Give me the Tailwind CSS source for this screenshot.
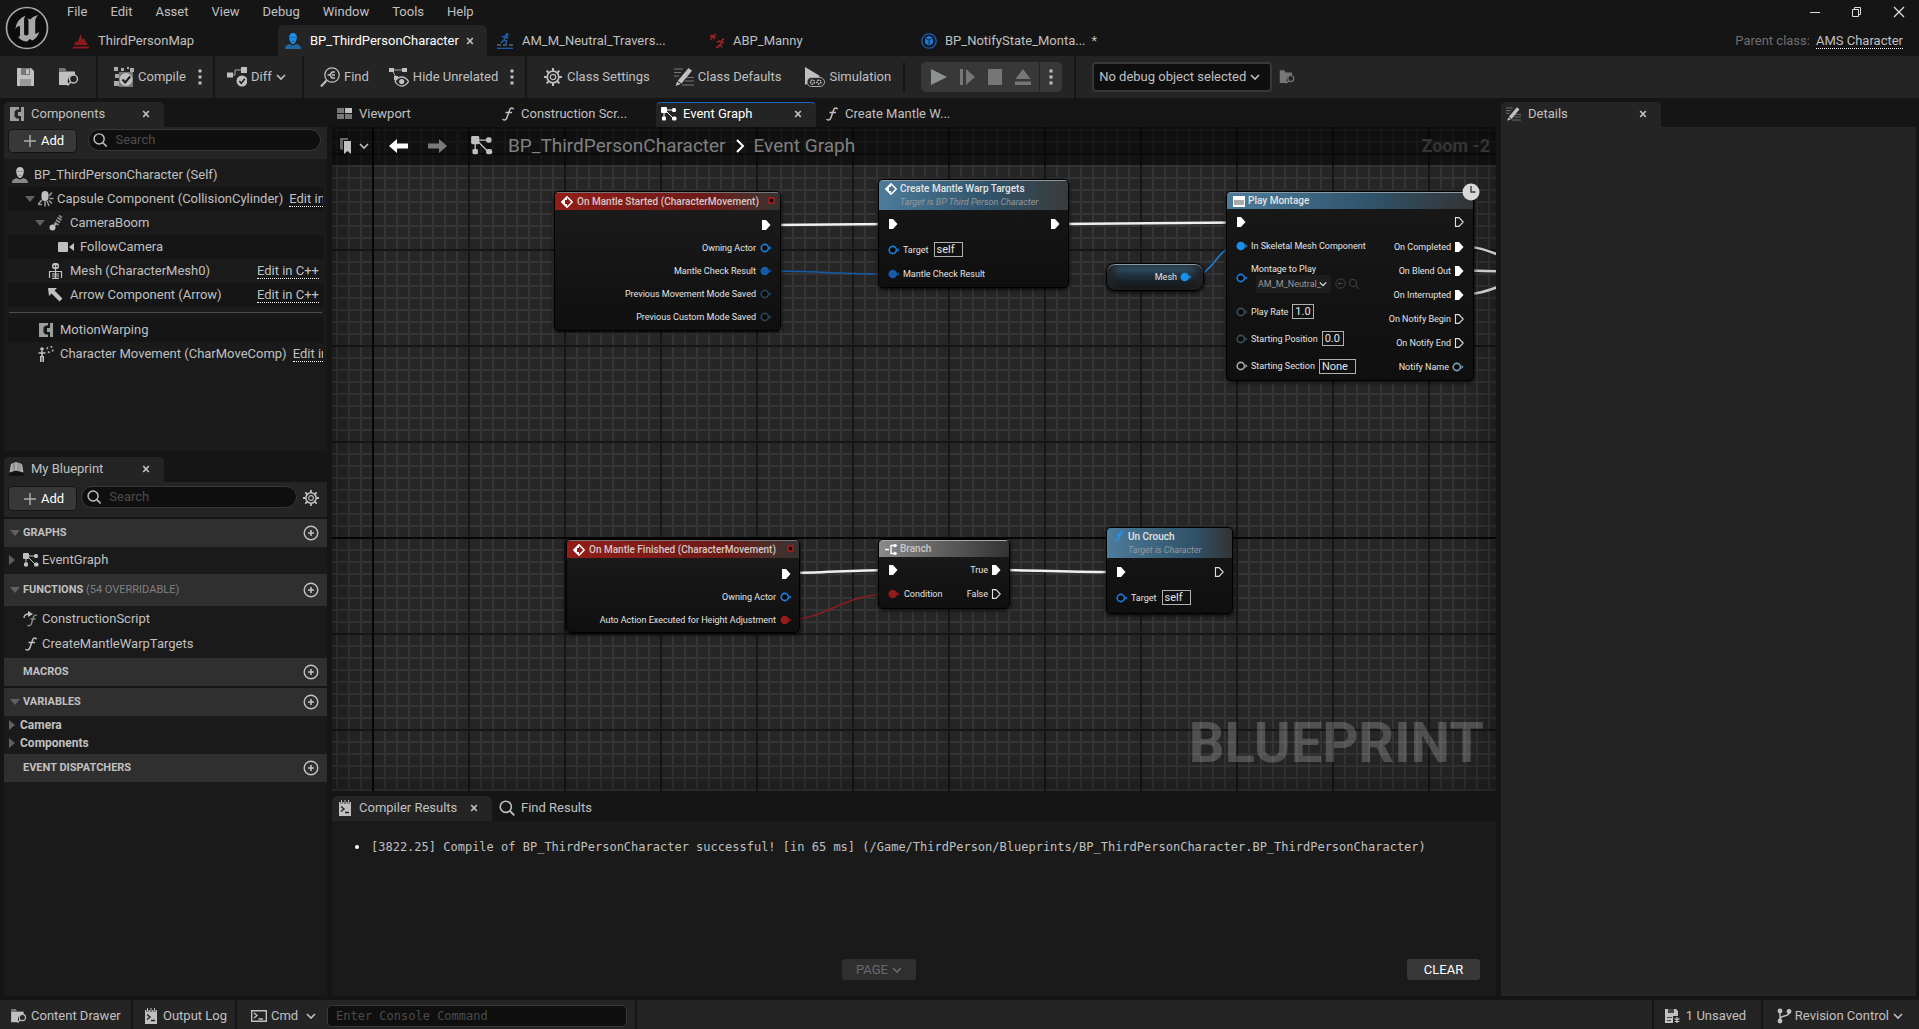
<!DOCTYPE html>
<html lang="en">
<head>
<meta charset="utf-8">
<title>BP_ThirdPersonCharacter</title>
<script src="https://cdn.jsdelivr.net/npm/@tailwindcss/browser@4"></script>
</head>
<body class="h-screen overflow-hidden bg-[#151515] font-['Roboto',sans-serif] text-[13px] leading-4 text-[#c0c0c0]">

<svg class="hidden" aria-hidden="true">
  <symbol id="chev" viewBox="0 0 10 10"><path d="M1 3l4 4 4-4" fill="none" stroke="currentColor" stroke-width="1.6"/></symbol>
  <symbol id="close" viewBox="0 0 8 8"><path d="M1.2 1l5.6 6M6.8 1L1.2 7" stroke="currentColor" stroke-width="1.7"/></symbol>
  <symbol id="dots" viewBox="0 0 4 16"><path d="M.5.5h3v3h-3zM.5 6.500h3v3h-3zM.5 12.500h3v3h-3z" fill="currentColor"/></symbol>
  <symbol id="search" viewBox="0 0 16 16"><circle cx="6.800" cy="6.800" r="5.600" fill="none" stroke="currentColor" stroke-width="1.600"/><path d="M11 11l4.300 4.300" stroke="currentColor" stroke-width="1.800"/></symbol>
  <symbol id="plus" viewBox="0 0 14 14"><path d="M7 1v12M1 7h12" stroke="currentColor" stroke-width="1.500"/></symbol>
  <symbol id="pluscircle" viewBox="0 0 16 16"><circle cx="8" cy="8" r="6.800" fill="none" stroke="currentColor" stroke-width="1.400"/><path d="M8 5v6M5 8h6" stroke="currentColor" stroke-width="1.600"/></symbol>
  <symbol id="down" viewBox="0 0 10 6"><path d="M0 0h10L5 6z" fill="#606060"/></symbol>
  <symbol id="right" viewBox="0 0 6 10"><path d="M0 0v10l6-5z" fill="#606060"/></symbol>
  <symbol id="gear" viewBox="0 0 18 18"><path d="M9 0v18M0 9h18M2.600 2.600l12.800 12.800M15.400 2.600L2.600 15.400" stroke="currentColor" stroke-width="2"/><circle cx="9" cy="9" r="5.800" fill="#242424" stroke="currentColor" stroke-width="1.700"/><circle cx="9" cy="9" r="2.700" fill="none" stroke="currentColor" stroke-width="1.200"/></symbol>
  <symbol id="comp" viewBox="0 0 14 14"><path d="M0 0h9v2.500H6.500L4.500 4.500v5l2 2H9V14H0zM11 0h3v14h-3v-5H8V5h3z" fill="#9a9f9c"/></symbol>
  <symbol id="graph" viewBox="0 0 16 14"><path d="M3 3v8M5 3h7M5 4l7 7" stroke="currentColor" stroke-width="1"/><rect width="6" height="6" rx="1" fill="currentColor"/><rect x="1" y="9.500" width="4" height="4" rx="1" fill="currentColor"/><rect x="11" y="1" width="4" height="4" rx="1.500" fill="currentColor"/><rect x="11" y="9.500" width="4.500" height="4" rx="1.500" fill="currentColor"/></symbol>
  <symbol id="func" viewBox="0 0 14 16"><path d="M12.500 3.200C12 1.500 9.600 1.400 8.800 3.500L5.800 12c-.8 2.400-3.400 2.600-4.200 1M4.500 6.500h6.500" fill="none" stroke="currentColor" stroke-width="1.500"/></symbol>
  <symbol id="pencil" viewBox="0 0 20 18"><path d="M0 1h9M0 4.500h7M0 8h5M12 9.500h8M11 13h9M8 17h12" stroke="#777" stroke-width="1.200"/><path d="M14.500 0L18 2.700 7.500 15.500 3.800 12.800z" fill="currentColor"/><path d="M3.200 13.600l3.500 2.500L1.500 18z" fill="currentColor"/></symbol>
  <symbol id="folder" viewBox="0 0 21 18"><path d="M1 0h6l1.500 3H17v2H1z" fill="#777"/><path d="M1 4h16v3a6 6 0 0 0-6 9.500V17H1z" fill="currentColor"/><circle cx="15.500" cy="11" r="4" fill="none" stroke="currentColor" stroke-width="1.500"/><path d="M12.700 14L9.500 17.500" stroke="currentColor" stroke-width="1.500"/></symbol>
  <symbol id="log" viewBox="0 0 12 16"><path d="M0 2h12v14H0z" fill="currentColor"/><path d="M2.500 0v3.500M6 0v3.500M9.500 0v3.500" stroke="#222" stroke-width="2.200"/><path d="M2.500 0v3M6 0v3M9.500 0v3" stroke="currentColor" stroke-width="1"/><path d="M2 6.500l3 2.500-3 2.500M6 12.500h4" fill="none" stroke="#222" stroke-width="1.500"/></symbol>
  <symbol id="person" viewBox="0 0 16 16"><path d="M8 0c2.600 0 3.800 1.800 3.800 4.200S10.300 11 8 11 4.200 6.600 4.200 4.200 5.400 0 8 0z" fill="currentColor"/><path d="M0 16c0-3.500 2.500-4.500 5-5 1.500 1.800 4.500 1.800 6 0 2.500.5 5 1.500 5 5z" fill="currentColor" opacity=".65"/><path d="M5.700 4.500h1.600M8.700 4.500h1.600M6.900 8.300h2.200" stroke="#111" stroke-opacity=".5" stroke-width=".9"/></symbol>
  <symbol id="execOn" viewBox="0 0 10 10"><path d="M1 0h4l4.500 5L5 10H1z" fill="#fff"/></symbol>
  <symbol id="execOff" viewBox="0 0 10 10"><path d="M1.500.6H5L9.200 5 5 9.400H1.500z" fill="none" stroke="#e0e0e0" stroke-width="1.100"/></symbol>
  <symbol id="pin" viewBox="0 0 12 10"><circle cx="4.800" cy="5" r="3.600" fill="#0a0a0a" stroke="currentColor" stroke-width="1.600"/><path d="M9.500 3v4l2-2z" fill="currentColor"/></symbol>
  <symbol id="pinOn" viewBox="0 0 12 10"><circle cx="4.800" cy="5" r="4.300" fill="currentColor"/><path d="M9.500 3v4l2-2z" fill="currentColor"/></symbol>
  <symbol id="event" viewBox="0 0 12 12"><path d="M6 .8L11.200 6 6 11.200.8 6z" fill="none" stroke="#fff" stroke-width="1.500"/><path d="M6 .8L.8 6 6 11.200V8H4V4h2z" fill="#fff"/></symbol>
</svg>

<div class="flex h-full flex-col">

  <!-- Title bar: menu and asset tabs -->
  <header class="flex h-14 shrink-0">
    <div class="flex w-[66px] shrink-0 items-center pl-[5px]">
      <svg class="size-11" viewBox="0 0 44 44"><circle cx="22" cy="22" r="20.500" fill="#0c0c0c" stroke="#a8a8a8" stroke-width="1.700"/><path d="M21 9.500c-6 2-10 7-10.500 13.500 1-2 2.500-3 3.500-3 .8 0 1 .6 1 1.500v7.500c0 1.500-.8 2-2 1.800 2.200 3 5.200 4.700 9.200 4.700l2.600-2.500 2.500 1.500c3.500-1.500 6-5 7-9-1.400 1.400-2.600 2.200-3.300 2.200-.5 0-.8-.4-.8-1V15c0-2.500 1.500-4.500 3-6-3 .7-5.500 2-8 4.500-1-.8-2-1-3-.8.900.6 1.300 1.500 1.300 2.600v13c-.7.800-1.600 1.200-2.600 1.200-1.200 0-1.800-.7-1.800-2V14c0-2 .7-3.500 1.900-4.500z" fill="#a8a8a8"/></svg>
    </div>
    <div class="flex min-w-0 flex-1 flex-col">
      <div class="flex h-[25px] items-center justify-between pb-px">
        <nav class="flex gap-[23px] pl-px">
          <a href="#">File</a><a href="#">Edit</a><a href="#">Asset</a><a href="#">View</a><a href="#">Debug</a><a href="#">Window</a><a href="#">Tools</a><a href="#">Help</a>
        </nav>
        <div class="flex items-center gap-[30px] pr-[14px]">
          <button aria-label="Minimize"><svg class="size-3" viewBox="0 0 12 12"><path d="M1 6.500h10" stroke="#ddd"/></svg></button>
          <button aria-label="Restore"><svg class="size-3" viewBox="0 0 12 12"><path d="M1.500 3.500h6v7h-6zM3.500 3V1.500h6v7H8" fill="none" stroke="#ddd"/></svg></button>
          <button aria-label="Close"><svg class="size-3" viewBox="0 0 12 12"><path d="M1 1l10 10M11 1L1 11" stroke="#ddd" stroke-width="1.300"/></svg></button>
        </div>
      </div>
      <div class="flex flex-1 justify-between">
        <div class="flex gap-[3px]">
          <div class="flex w-[209px] items-center gap-2 pl-[7px]"><svg class="size-4 text-[#8e1b1b]" viewBox="0 0 16 16"><path d="M0 15.500h16v-2H0zM1 12l2-4 1.500 2L7.500 1l2 6 1.500-2 2 4 2 3z" fill="currentColor"/></svg><span class="pl-px">ThirdPersonMap</span></div>
          <div class="flex w-[209px] items-center gap-[7px] rounded-t-[5px] bg-[#242424] pl-[7px] text-white"><svg class="size-4 text-[#1a8fe8]"><use href="#person"/></svg><span class="pl-[2px]">BP_ThirdPersonCharacter</span><button aria-label="Close tab" class="text-[#c0c0c0]"><svg class="size-2"><use href="#close"/></svg></button></div>
          <div class="flex w-[209px] items-center gap-2 pl-[7px]"><svg class="size-4 text-[#1a64b5]" viewBox="0 0 16 16"><circle cx="10" cy="1.500" r="1.500" fill="currentColor"/><path d="M5 4l4-1-2 4 2.500 1L9 11M7 7l-3 3M9 3l2 2.500" fill="none" stroke="currentColor" stroke-width="1.500"/><path d="M0 12h4M6 12h4M12 12h4" stroke="#456" stroke-width="2"/><path d="M0 15.300h16" stroke="currentColor" stroke-width="1.200"/></svg><span class="pl-px">AM_M_Neutral_Travers...</span></div>
          <div class="flex w-[209px] items-center gap-2 pl-[7px]"><svg class="size-4 text-[#a02525]" viewBox="0 0 16 16"><g fill="none" stroke="currentColor" stroke-width="1.500"><path d="M1 3l3-.5L6 4 4.500 6M4 3L2.500 5.500 1 6.500M8 9l3-1 2 .5-1.500 3 1.500 3M11.500 11L9 14l-2 .5M13 9l2 1.500"/></g><circle cx="6" cy="1.500" r="1" fill="currentColor"/><circle cx="14" cy="6.500" r="1.200" fill="currentColor"/></svg><span>ABP_Manny</span></div>
          <div class="flex w-[209px] items-center gap-[6px] pl-[7px]"><svg class="size-4" viewBox="0 0 16 16"><circle cx="8" cy="8" r="7.200" fill="none" stroke="#1a64b5" stroke-width="1.300"/><path d="M8 2.800l4 2v5.500l-4 2.700-4-2.700V4.800z" fill="#1c78d8"/><path d="M4 5l4 2 4-2M8 7v6" stroke="#0c2c50" fill="none"/></svg><span class="pl-[2px]">BP_NotifyState_Monta...</span><span>*</span></div>
        </div>
        <div class="flex items-center gap-[6px] pr-4"><span class="text-[#6e6e6e]">Parent class:</span><a href="#" class="border-b border-dotted border-white leading-[15px]">AMS Character</a></div>
      </div>
    </div>
  </header>

  <!-- Toolbar -->
  <div class="flex h-[42px] shrink-0 items-stretch bg-[#242424]">
    <div class="flex w-[98px] items-center gap-[23px] border-r-2 border-[#171717] pl-4">
      <button aria-label="Save"><svg class="h-[18px] w-[19px]" viewBox="0 0 19 18"><path d="M1 0h14l3 3v15H1z" fill="#c0c0c0"/><path d="M5 0h9v7H5z" fill="#777"/><path d="M10 1h3v5h-3z" fill="#c0c0c0"/><path d="M4 11h11v7H4z" fill="#999"/></svg></button>
      <button aria-label="Browse"><svg class="h-[18px] w-[21px]"><use href="#folder"/></svg></button>
    </div>
    <div class="flex w-[117px] items-center justify-between border-r-2 border-[#171717] pr-[11px] pl-4">
      <button class="flex items-center gap-1"><svg class="size-5" viewBox="0 0 20 20"><path d="M0 0h4v4H0zM7 1h3v3H7zM13 0h2v2h-2zM16 1h4v4h-4zM1 7h4v4H1zM0 14h5v5H0z" fill="#aaa"/><path d="M5 5h14v15H5z" fill="#777"/><circle cx="12" cy="12.500" r="6.500" fill="#c0c0c0"/><path d="M8.500 12.500l2.700 3 5-6" fill="none" stroke="#1a1a1a" stroke-width="2"/></svg>Compile</button>
      <button aria-label="Compile options"><svg class="h-4 w-1"><use href="#dots"/></svg></button>
    </div>
    <div class="flex w-[89px] items-center border-r-2 border-[#171717] pl-3">
      <button class="flex items-center gap-1"><svg class="size-5" viewBox="0 0 20 20"><path d="M3 8h5V3h7" fill="none" stroke="#aaa"/><path d="M0 5.500h6v5H0zM14 0h6v6h-6z" fill="#c0c0c0"/><circle cx="15" cy="14" r="5.500" fill="#c0c0c0"/><path d="M12.300 14l2 2.300 3.500-4.500" fill="none" stroke="#222" stroke-width="1.600"/></svg>Diff<svg class="size-[10px]"><use href="#chev"/></svg></button>
    </div>
    <div class="flex w-[223px] items-center gap-5 border-r-2 border-[#171717] pr-[10px] pl-4">
      <button class="flex items-center gap-1"><svg class="size-5" viewBox="0 0 20 20"><circle cx="12" cy="8" r="7.200" fill="none" stroke="#c0c0c0" stroke-width="1.300"/><path d="M6.500 13.500L1 19.500" stroke="#c0c0c0" stroke-width="2"/><path d="M7.500 8H10M10 8l2-3h3M10 8l2 3h3M12 8h3" fill="none" stroke="#c0c0c0" stroke-width="1.500"/></svg>Find</button>
      <button class="flex items-center gap-1 whitespace-nowrap"><svg class="size-5" viewBox="0 0 20 20"><path d="M3 3l5 9M5 3h10" stroke="#aaa"/><path d="M0 1h5v4H0zM13 1h5v4h-5zM5 9h4v4H5z" fill="#c0c0c0"/><path d="M6 14.500c2-3.500 4-4.500 6.500-4.500S17.500 11 19.500 14.500c-2 3-4 4.500-7 4.500S8 17.500 6 14.500z" fill="#242424" stroke="#c0c0c0" stroke-width="1.300"/><circle cx="12.700" cy="14.500" r="2.600" fill="#c0c0c0"/></svg>Hide Unrelated</button>
      <button aria-label="Hide options" class="-ml-2"><svg class="h-4 w-1"><use href="#dots"/></svg></button>
    </div>
    <div class="flex items-center gap-6 pl-[17px]">
      <button class="flex items-center gap-[5px]"><svg class="size-[18px]"><use href="#gear"/></svg>Class Settings</button>
      <button class="flex items-center gap-1"><svg class="h-[18px] w-5"><use href="#pencil"/></svg>Class Defaults</button>
      <button class="flex items-center gap-1"><svg class="size-5" viewBox="0 0 20 20"><path d="M0 0l15 9L0 18z" fill="#c0c0c0"/><rect x="2" y="10.500" width="17.500" height="9" rx="4.500" fill="#242424" stroke="#aaa"/><circle cx="7.500" cy="15" r="2" fill="none" stroke="#c0c0c0" stroke-width="1.500" stroke-dasharray="1.500 .8"/><circle cx="14" cy="15" r="2" fill="none" stroke="#c0c0c0" stroke-width="1.500" stroke-dasharray="1.500 .8"/></svg>Simulation</button>
      <div class="-ml-3 h-[30px] w-[2px] bg-[#171717]"></div>
    </div>
    <div class="flex items-center border-r-2 border-[#171717] pr-3 pl-4">
      <div class="flex h-[30px] w-[141px] items-center rounded-[5px] bg-[#383838] pl-[10px] text-[#767676]">
        <button aria-label="Play"><svg class="h-4 w-4" viewBox="0 0 16 16"><path d="M0 0l16 8L0 16z" fill="#8d918f"/></svg></button>
        <button aria-label="Step" class="ml-[13px]"><svg class="size-4" viewBox="0 0 16 16"><path d="M0 0h3v16H0zM6 0l9 8-9 8z" fill="currentColor"/></svg></button>
        <button aria-label="Stop" class="ml-3"><svg class="h-4 w-[14px]" viewBox="0 0 14 16"><path d="M0 0h14v16H0z" fill="currentColor"/></svg></button>
        <button aria-label="Eject" class="ml-[13px]"><svg class="size-4" viewBox="0 0 16 16"><path d="M8 0l7.500 10H.5zM0 12.500h16V16H0z" fill="currentColor"/></svg></button>
        <button aria-label="Play options" class="ml-2 flex h-full flex-1 items-center justify-center border-l border-[#242424] text-[#c0c0c0]"><svg class="h-4 w-1"><use href="#dots"/></svg></button>
      </div>
    </div>
    <div class="flex items-center gap-[7px] pl-4">
      <div class="relative flex items-center">
        <select aria-label="Debug object" class="h-[30px] w-[180px] appearance-none rounded-[4px] border-2 border-[#383838] bg-[#0f0f0f] pl-[5px]"><option>No debug object selected</option></select>
        <svg class="pointer-events-none absolute right-3 size-[10px]"><use href="#chev"/></svg>
      </div>
      <button aria-label="Locate debug object" class="text-[#777]"><svg class="h-[14px] w-4"><use href="#folder"/></svg></button>
    </div>
  </div>

  <!-- Panels -->
  <main class="flex min-h-0 flex-1 gap-[5px] pt-1 pb-1">

    <!-- Left column -->
    <div class="flex w-[327px] shrink-0 flex-col gap-[6px] pl-1">
      <section class="flex min-h-0 grow-[349] basis-0 flex-col">
        <div class="flex h-[25px] w-40 shrink-0 items-center rounded-t-[5px] bg-[#242424] pr-[14px] pb-[2px] pl-[6px]"><svg class="mr-[7px] size-[14px]"><use href="#comp"/></svg>Components<button aria-label="Close Components" class="ml-auto"><svg class="size-2"><use href="#close"/></svg></button></div>
        <div class="flex h-8 shrink-0 items-start bg-[#242424] px-1 pt-[2px]">
          <button class="flex h-6 w-[69px] items-center gap-[4px] rounded-[4px] border border-[#141414] bg-[#383838] pl-[14px] text-white"><svg class="size-[14px] text-[#aaa]"><use href="#plus"/></svg>Add</button>
          <label class="ml-[11px] flex h-[22px] flex-1 items-center gap-2 rounded-full border border-[#383838] bg-[#0f0f0f] pl-1"><svg class="size-4"><use href="#search"/></svg><input type="text" aria-label="Search components" placeholder="Search" class="w-full bg-transparent outline-none placeholder:text-[#4c4c4c]"></label>
          <div class="w-[2px]"></div>
        </div>
        <div class="min-h-0 flex-1 overflow-hidden bg-[#1a1a1a] px-1 pt-1 whitespace-nowrap">
          <div class="flex h-6 items-center gap-[6px] pl-1"><svg class="size-4"><use href="#person"/></svg>BP_ThirdPersonCharacter (Self)</div>
          <div class="flex h-6 items-center overflow-hidden bg-[#151515] pl-[17px]"><svg class="h-[6px] w-[10px] shrink-0"><use href="#down"/></svg><svg class="mx-[3px] size-4 shrink-0" viewBox="0 0 16 16"><rect x="3.500" width="7" height="10" rx="3.500" fill="#c0c0c0"/><path d="M11 5l3-3.500M11.500 7.500h4M11 9.500l3 3M4 9l-4 4.500h4M7 10v5.500M9 10l2 5" fill="none" stroke="#999" stroke-width="1.500"/></svg><span>Capsule Component (CollisionCylinder)</span><a href="#" class="ml-[6px] border-b border-dotted border-white leading-[14px]">Edit in C++</a></div>
          <div class="flex h-6 items-center pl-[27px]"><svg class="h-[6px] w-[10px]"><use href="#down"/></svg><svg class="mr-[5px] ml-1 size-4" viewBox="0 0 16 16"><circle cx="3.500" cy="12.500" r="3" fill="#c0c0c0"/><path d="M5.500 10l2-2" stroke="#c0c0c0" stroke-width="2"/><path d="M5.500 7.500l4 2.500M7 5l4 2.500M8.500 2.500l4 2.500M10 .5l3 2" stroke="#999" stroke-width="1.500"/></svg>CameraBoom</div>
          <div class="flex h-6 items-center gap-[6px] bg-[#151515] pl-[50px]"><svg class="h-[10px] w-4" viewBox="0 0 16 10"><rect width="10" height="10" rx="1" fill="#c0c0c0"/><path d="M11 5l5-4v8z" fill="#c0c0c0"/></svg>FollowCamera</div>
          <div class="flex h-6 items-center pr-1 pl-[40px]"><svg class="mr-[7px] h-4 w-[15px]" viewBox="0 0 15 16"><rect x="4" y="0" width="7" height="6" rx="2.500" fill="#c0c0c0"/><path d="M5.500 2.500h1.500v1.500H5.500zM8.200 2.500h1.500v1.500H8.200z" fill="#1a1a1a"/><path d="M7.500 6v9M2 8.500h11M4 11h7M4 13h7M1.500 8v7M13.500 8v7M4 15.300h7" stroke="#c0c0c0" stroke-width="1.200"/></svg>Mesh (CharacterMesh0)<a href="#" class="ml-auto border-b border-dotted border-white leading-[14px]">Edit in C++</a></div>
          <div class="flex h-6 items-center bg-[#151515] pr-1 pl-[40px]"><svg class="mr-[7px] h-[14px] w-[15px]" viewBox="0 0 15 14"><path d="M0 0h9L6.500 2.500l8 8-3 3-8-8L1 8z" fill="#c0c0c0"/></svg>Arrow Component (Arrow)<a href="#" class="ml-auto border-b border-dotted border-white leading-[14px]">Edit in C++</a></div>
          <div class="mx-px my-[5px] h-px bg-[#4c4c4c]"></div>
          <div class="flex h-6 items-center gap-[7px] bg-[#151515] pl-[31px]"><svg class="size-[14px]"><use href="#comp"/></svg>MotionWarping</div>
          <div class="flex h-6 items-center overflow-hidden pl-[30px]"><svg class="mr-[6px] size-4 shrink-0" viewBox="0 0 16 16"><circle cx="4" cy="3" r="1.800" fill="#c0c0c0"/><path d="M4 5v6M.5 7h7M2.800 10v6M5.200 10v6" stroke="#c0c0c0" stroke-width="1.600"/><circle cx="12" cy="3.500" r="3" fill="none" stroke="#aaa" stroke-width="1.500" stroke-dasharray="2.200 2.500"/></svg>Character Movement (CharMoveComp)<a href="#" class="ml-[6px] border-b border-dotted border-white leading-[14px]">Edit in C++</a></div>
        </div>
      </section>

      <section class="flex min-h-0 grow-[539] basis-0 flex-col bg-[#151515]">
        <div class="flex h-[25px] w-40 shrink-0 items-center rounded-t-[5px] bg-[#242424] pr-[14px] pb-[2px] pl-[5px]"><svg class="mr-[7px] h-[14px] w-[15px]" viewBox="0 0 15 14"><path d="M2 2l5-2v8.500l-6.500 2zM7 0l6 2 1.500 8.500L7 8.500z" fill="#b0b0b0"/><path d="M4 2v7M5.500 1v7M9 1v7.500M11 2v7" stroke="#777" stroke-width=".8"/><path d="M0 11l7-2 8 2v3H0z" fill="#111"/></svg>My Blueprint<button aria-label="Close My Blueprint" class="ml-auto"><svg class="size-2"><use href="#close"/></svg></button></div>
        <div class="flex h-[35px] shrink-0 items-start bg-[#242424] px-1 pt-1">
          <button class="flex h-[25px] w-[69px] items-center gap-[4px] rounded-[4px] border border-[#141414] bg-[#383838] pl-[14px] text-white"><svg class="size-[14px] text-[#aaa]"><use href="#plus"/></svg>Add</button>
          <label class="ml-1 flex h-[22px] flex-1 items-center gap-2 rounded-full border border-[#383838] bg-[#0f0f0f] pl-[5px]"><svg class="size-4"><use href="#search"/></svg><input type="text" aria-label="Search blueprint" placeholder="Search" class="w-full bg-transparent outline-none placeholder:text-[#4c4c4c]"></label>
          <button aria-label="View options" class="mt-1 mr-1 ml-[6px]"><svg class="size-4"><use href="#gear"/></svg></button>
        </div>
        <div class="min-h-0 flex-1 bg-[#1a1a1a]">
          <div class="border-t-2 border-[#151515]"></div>
          <div class="flex h-7 items-center gap-[3px] bg-[#2f2f2f] pr-2 pl-[6px]"><svg class="h-[6px] w-[10px]"><use href="#down"/></svg><h2 class="text-[11px] font-bold">GRAPHS</h2><button aria-label="Add graph" class="ml-auto"><svg class="size-4"><use href="#pluscircle"/></svg></button></div>
          <div class="flex h-[27px] items-center pb-[2px] pl-[5px]"><svg class="mr-2 h-[10px] w-[6px]"><use href="#right"/></svg><svg class="mr-[3px] h-[14px] w-4"><use href="#graph"/></svg>EventGraph</div>
          <div class="flex h-8 items-center gap-[3px] bg-[#2f2f2f] pr-2 pl-[6px]"><svg class="h-[6px] w-[10px]"><use href="#down"/></svg><h2 class="text-[11px] font-bold">FUNCTIONS <span class="font-normal text-[#808080]">(54 OVERRIDABLE)</span></h2><button aria-label="Add function" class="ml-auto"><svg class="size-4"><use href="#pluscircle"/></svg></button></div>
          <div class="flex h-[26px] items-center gap-1 pl-[19px]"><svg class="h-4 w-[15px]" viewBox="0 0 15 16"><path d="M1 7c0-3 2-4 5-4" fill="none" stroke="#c0c0c0" stroke-width="1.400"/><path d="M5 0l5 3-5 3z" fill="#c0c0c0"/><path d="M14 4.500c-1.500-1-3 0-3.500 1.500L8.500 12.500C8 14.500 6 15.500 4.500 14M7.500 8h5" fill="none" stroke="#888" stroke-width="1.400"/></svg>ConstructionScript</div>
          <div class="flex h-[26px] items-center gap-1 pb-[2px] pl-[20px]"><svg class="h-4 w-[14px]"><use href="#func"/></svg>CreateMantleWarpTargets</div>
          <div class="flex h-7 items-center bg-[#2f2f2f] pr-2 pl-[19px]"><h2 class="text-[11px] font-bold">MACROS</h2><button aria-label="Add macro" class="ml-auto"><svg class="size-4"><use href="#pluscircle"/></svg></button></div>
          <div class="border-t-2 border-[#151515]"></div>
          <div class="flex h-7 items-center gap-[3px] bg-[#2f2f2f] pr-2 pl-[6px]"><svg class="h-[6px] w-[10px]"><use href="#down"/></svg><h2 class="text-[11px] font-bold">VARIABLES</h2><button aria-label="Add variable" class="ml-auto"><svg class="size-4"><use href="#pluscircle"/></svg></button></div>
          <div class="flex h-[18px] items-center gap-[5px] pl-[5px] text-xs font-bold"><svg class="h-[10px] w-[6px]"><use href="#right"/></svg>Camera</div>
          <div class="flex h-5 items-start gap-[5px] pt-px pl-[5px] text-xs font-bold"><svg class="mt-[3px] h-[10px] w-[6px]"><use href="#right"/></svg>Components</div>
          <div class="flex h-7 items-center bg-[#2f2f2f] pr-2 pl-[19px]"><h2 class="text-[11px] font-bold">EVENT DISPATCHERS</h2><button aria-label="Add dispatcher" class="ml-auto"><svg class="size-4"><use href="#pluscircle"/></svg></button></div>
        </div>
      </section>
    </div>

    <!-- Centre column -->
    <div class="flex min-w-0 flex-1 flex-col">
      <div class="flex h-[25px] shrink-0">
        <div class="flex w-40 items-center pb-[2px] pl-[5px]"><svg class="mr-[7px] h-[11px] w-[15px]" viewBox="0 0 15 11"><path d="M0 0h7v5H0zM0 6h7v5H0zM8 6h7v5H8z" fill="#777"/><path d="M8 0h7v5H8z" fill="#c0c0c0"/></svg>Viewport</div>
        <div class="flex w-[164px] items-center gap-[6px] pb-[2px] pl-[9px]"><svg class="h-4 w-[14px]"><use href="#func"/></svg>Construction Scr...</div>
        <div class="flex w-40 items-center rounded-t-[5px] border-t border-[#1767c0] bg-[#242424] pr-[14px] pb-[3px] pl-[5px] text-white"><svg class="mr-[6px] h-[14px] w-4"><use href="#graph"/></svg>Event Graph<button aria-label="Close Event Graph" class="ml-auto text-[#c0c0c0]"><svg class="size-2"><use href="#close"/></svg></button></div>
        <div class="flex items-center gap-[6px] pb-[2px] pl-[9px]"><svg class="h-4 w-[14px]"><use href="#func"/></svg>Create Mantle W...</div>
      </div>

      <!-- Graph canvas -->
      <section class="relative min-h-0 grow-[664] basis-0 overflow-hidden bg-[#262626]">
        <svg class="absolute inset-0 size-full">
          <defs>
            <pattern id="minor" width="12" height="12" patternUnits="userSpaceOnUse" x="4" y="2"><path d="M0 0h2v12H0zM0 0h12v2H0z" fill="#353535"/></pattern>
            <pattern id="major" width="96" height="96" patternUnits="userSpaceOnUse" x="40" y="26"><path d="M0 0h2v96H0zM0 0h96v2H0z" fill="#161616"/></pattern>
          </defs>
          <rect width="100%" height="100%" fill="url(#minor)"/>
          <rect width="100%" height="100%" fill="url(#major)"/>
          <rect x="40" width="2" height="100%" fill="#060606"/>
          <rect y="410" width="100%" height="2" fill="#060606"/>
        </svg>
        <div class="pointer-events-none absolute inset-0 shadow-[inset_0_0_50px_rgba(0,0,0,0.45)]"></div>
        <div class="absolute right-3 bottom-5 text-[56px] leading-[56px] font-bold text-white/20">BLUEPRINT</div>
        <svg class="absolute inset-0 size-full" fill="none">
          <g stroke="#f0f0f0" stroke-width="2.500">
            <path d="M438 98C480 98 520 97 558 97"/>
            <path d="M726 97C780 97 840 95.500 906 95.500"/>
            <path d="M456 446C490 446 520 443 558 443"/>
            <path d="M666 443C700 443 740 445 786 445"/>
            <g stroke="#c8c8c8"><path d="M1130 119.500c14 0 24 3 40 10"/><path d="M1130 143.500c14 0 26 .5 40 1"/><path d="M1130 167.500c14 0 24-3 40-9"/></g>
          </g>
          <path d="M438 144C480 144 510 147 558 147" stroke="#155ba8" stroke-width="1.500"/>
          <path d="M856 150c28 0 26-30 50-31" stroke="#1a82dc" stroke-width="1.500"/>
          <path d="M456 493c36 0 56-26 102-26" stroke="#8e1d1d" stroke-width="1.500"/>
        </svg>

        <!-- Event: On Mantle Started -->
        <article class="absolute top-[64px] left-[222px] w-[227px] overflow-hidden rounded-[5px] border border-black bg-linear-to-b from-[#1c1c1c] to-[#0f0f0f] pb-[2px] text-[9px] leading-3 text-[#e4e4e4] shadow-[0_1px_4px_black]">
          <h3 class="flex h-[18px] items-center gap-1 border-t border-[#777] bg-linear-to-r from-[#931d18] via-[#6b1a18] via-70% to-[#333] pl-[6px] text-[10px] font-medium text-[#d4c8c8]"><svg class="size-3 shrink-0"><use href="#event"/></svg><span class="whitespace-nowrap">On Mantle Started (CharacterMovement)</span></h3>
          <ul class="flex flex-col pt-[3px] pr-2 text-right">
            <li class="flex h-[23px] items-center justify-end pr-px"><svg class="size-[10px]"><use href="#execOn"/></svg></li>
            <li class="flex h-[23px] items-center justify-end gap-[4px]">Owning Actor<svg class="h-[10px] w-3 text-[#1a7fe0]"><use href="#pin"/></svg></li>
            <li class="flex h-[23px] items-center justify-end gap-[4px]">Mantle Check Result<svg class="h-[10px] w-3 text-[#155ba8]"><use href="#pinOn"/></svg></li>
            <li class="flex h-[23px] items-center justify-end gap-[4px]">Previous Movement Mode Saved<svg class="h-[10px] w-3 text-[#2b4554]"><use href="#pin"/></svg></li>
            <li class="flex h-[23px] items-center justify-end gap-[4px]">Previous Custom Mode Saved<svg class="h-[10px] w-3 text-[#2b4554]"><use href="#pin"/></svg></li>
          </ul>
          <span class="absolute top-[5px] right-[5px] size-[7px] border-2 border-[#931d18] bg-black"></span>
        </article>

        <!-- Function: Create Mantle Warp Targets -->
        <article class="absolute top-[52px] left-[546px] w-[191px] overflow-hidden rounded-[5px] border border-black bg-linear-to-b from-[#181818] to-[#0f0f0f] pb-px text-[9px] leading-3 text-[#e4e4e4] shadow-[0_1px_4px_black]">
          <header class="flex h-[30px] gap-[3px] border-t border-[#8a9aa5] bg-linear-to-r from-[#4d7c9b] via-[#2f5269] via-60% to-[#3a3a3a] pt-px pl-[6px]"><svg class="mt-px size-3"><use href="#event"/></svg><div><h3 class="text-[10px] font-medium leading-[14px]">Create Mantle Warp Targets</h3><p class="text-[#96999c] italic">Target is BP Third Person Character</p></div></header>
          <div class="flex h-[28px] items-center justify-between pr-2 pl-[9px]"><svg class="size-[10px]"><use href="#execOn"/></svg><svg class="size-[10px]"><use href="#execOn"/></svg></div>
          <label class="flex h-[23px] items-center pl-[9px]"><svg class="mr-[3px] h-[10px] w-3 text-[#1a7fe0]"><use href="#pin"/></svg>Target<input type="text" value="self" class="ml-[5px] h-[15px] w-[29px] border border-[#b0b0b0] pl-[2px] text-[11px]"></label>
          <div class="flex h-[25px] items-center gap-[3px] pl-[9px]"><svg class="h-[10px] w-3 text-[#155ba8]"><use href="#pinOn"/></svg>Mantle Check Result</div>
        </article>

        <!-- Variable: Mesh -->
        <article class="absolute top-[136px] left-[774px] flex h-7 w-[98px] items-center justify-end gap-[3px] rounded-[9px] border border-black bg-linear-to-b from-[#3a6a8c] via-[#20303c] via-45% to-[#111] pr-[11px] text-[9px] leading-3 text-[#e4e4e4] shadow-[inset_0_1px_0_#8a9aa5,inset_6px_0_8px_#222,inset_-6px_0_8px_#222,0_1px_4px_black]">Mesh<svg class="h-[10px] w-3 text-[#1a8fe8]"><use href="#pinOn"/></svg></article>

        <!-- Latent: Play Montage -->
        <article class="absolute top-[64px] left-[894px] w-[248px] rounded-[5px] border border-black bg-linear-to-b from-[#181818] to-[#0f0f0f] text-[9px] leading-3 text-[#e4e4e4] shadow-[0_1px_4px_black]">
          <h3 class="flex h-[17px] items-center gap-[3px] rounded-t-[4px] border-t border-[#8a9aa5] bg-linear-to-r from-[#4d7c9b] via-[#2f5269] via-60% to-[#333] pl-[6px] text-[10px] font-medium"><svg class="h-[11px] w-3" viewBox="0 0 12 11"><path d="M0 0h12v11H0z" fill="#fff"/><path d="M1 4h10v5H1z" fill="#aaa"/></svg>Play Montage</h3>
          <div class="flex justify-between px-[9px]">
            <ul class="flex flex-col">
              <li class="flex h-[26px] items-center"><svg class="size-[10px]"><use href="#execOn"/></svg></li>
              <li class="flex h-[22px] items-center gap-[3px]"><svg class="h-[10px] w-3 text-[#1a8fe8]"><use href="#pinOn"/></svg>In Skeletal Mesh Component</li>
              <li class="flex h-[41px] items-center gap-[3px]"><svg class="h-[10px] w-3 text-[#1a7fe0]"><use href="#pin"/></svg>
                <label>Montage to Play
                  <span class="relative ml-[5px] flex items-center"><select class="h-[18px] w-[75px] appearance-none rounded-[2px] bg-[#1d1d1d] pl-[2px] text-[9px] text-[#999]"><option>AM_M_Neutral_</option></select><svg class="absolute left-[63px] size-2"><use href="#chev"/></svg><svg class="ml-1 h-[11px] w-6 text-[#444]" viewBox="0 0 24 11"><circle cx="5.500" cy="5.500" r="4.700" fill="none" stroke="currentColor"/><path d="M3 5.500h5M5 3.500l-2 2 2 2" fill="none" stroke="currentColor"/><circle cx="18" cy="5" r="3.700" fill="none" stroke="currentColor"/><path d="M20.500 7.500L24 11" stroke="currentColor"/></svg></span>
                </label></li>
              <li class="flex h-[27px] items-center"><label class="flex items-center gap-[3px]"><svg class="h-[10px] w-3 text-[#37505a]"><use href="#pin"/></svg>Play Rate<input type="text" value="1.0" class="ml-px h-[15px] w-[22px] border border-[#b0b0b0] pl-[2px] text-[11px]"></label></li>
              <li class="flex h-[27px] items-center"><label class="flex items-center gap-[3px]"><svg class="h-[10px] w-3 text-[#37505a]"><use href="#pin"/></svg>Starting Position<input type="text" value="0.0" class="ml-px h-[15px] w-[22px] border border-[#b0b0b0] pl-[2px] text-[11px]"></label></li>
              <li class="flex h-[28px] items-center"><label class="flex items-center gap-[3px]"><svg class="h-[10px] w-3 text-[#a8a8a8]"><use href="#pin"/></svg>Starting Section<input type="text" value="None" class="ml-px h-[15px] w-[37px] border border-[#b0b0b0] pl-[2px] text-[11px]"></label></li>
            </ul>
            <ul class="flex flex-col items-end">
              <li class="flex h-[26px] items-center"><svg class="size-[10px]"><use href="#execOff"/></svg></li>
              <li class="flex h-6 items-center gap-[3px]">On Completed<svg class="size-[10px]"><use href="#execOn"/></svg></li>
              <li class="flex h-6 items-center gap-[3px]">On Blend Out<svg class="size-[10px]"><use href="#execOn"/></svg></li>
              <li class="flex h-6 items-center gap-[3px]">On Interrupted<svg class="size-[10px]"><use href="#execOn"/></svg></li>
              <li class="flex h-6 items-center gap-[3px]">On Notify Begin<svg class="size-[10px]"><use href="#execOff"/></svg></li>
              <li class="flex h-6 items-center gap-[3px]">On Notify End<svg class="size-[10px]"><use href="#execOff"/></svg></li>
              <li class="flex h-6 items-center gap-[3px]">Notify Name<svg class="h-[10px] w-3 text-[#7ba3bb]"><use href="#pin"/></svg></li>
            </ul>
          </div>
          <svg class="absolute -top-[9px] -right-[7px] size-[18px]" viewBox="0 0 18 18"><circle cx="9" cy="9" r="8.500" fill="#d8d8d8"/><path d="M9 3v6h4.500" fill="none" stroke="#333" stroke-width="1.300"/></svg>
        </article>

        <!-- Event: On Mantle Finished -->
        <article class="absolute top-[412px] left-[234px] w-[234px] overflow-hidden rounded-[5px] border border-black bg-linear-to-b from-[#1c1c1c] to-[#0f0f0f] text-[9px] leading-3 text-[#e4e4e4] shadow-[0_1px_4px_black]">
          <h3 class="flex h-[18px] items-center gap-1 border-t border-[#777] bg-linear-to-r from-[#931d18] via-[#6b1a18] via-70% to-[#333] pl-[6px] text-[10px] font-medium text-[#d4c8c8]"><svg class="size-3 shrink-0"><use href="#event"/></svg><span class="whitespace-nowrap">On Mantle Finished (CharacterMovement)</span></h3>
          <ul class="flex flex-col pt-1 pr-[7px] pb-px">
            <li class="flex h-[23px] items-center justify-end pr-px"><svg class="size-[10px]"><use href="#execOn"/></svg></li>
            <li class="flex h-[23px] items-center justify-end gap-[4px]">Owning Actor<svg class="h-[10px] w-3 text-[#1a7fe0]"><use href="#pin"/></svg></li>
            <li class="flex h-[23px] items-center justify-end gap-[4px]">Auto Action Executed for Height Adjustment<svg class="h-[10px] w-3 text-[#931d18]"><use href="#pinOn"/></svg></li>
          </ul>
          <span class="absolute top-[5px] right-[5px] size-[7px] border-2 border-[#931d18] bg-black"></span>
        </article>

        <!-- Branch -->
        <article class="absolute top-[412px] left-[546px] w-[132px] overflow-hidden rounded-[5px] border border-black bg-linear-to-b from-[#1c1c1c] to-[#0f0f0f] pb-[2px] text-[9px] leading-3 text-[#e4e4e4] shadow-[0_1px_4px_black]">
          <h3 class="flex h-[17px] items-center gap-[3px] border-t border-[#aaa] bg-linear-to-r from-[#8a8a8a] via-[#555] via-60% to-[#333] pl-[6px] text-[10px] font-medium text-[#c8c8c8]"><svg class="h-[11px] w-3" viewBox="0 0 12 11"><path d="M0 5.500h4M11 1.500H6v8h5M9 0l2.500 1.500L9 3M9 8l2.500 1.500L9 11" fill="none" stroke="#fff" stroke-width="1.400"/></svg>Branch</h3>
          <div class="flex h-[25px] items-center justify-between pr-2 pl-[9px]"><svg class="size-[10px]"><use href="#execOn"/></svg><span class="flex items-center gap-[3px]">True<svg class="size-[10px]"><use href="#execOn"/></svg></span></div>
          <div class="flex h-6 items-center justify-between pr-2 pl-[9px]"><span class="flex items-center gap-[4px]"><svg class="h-[10px] w-3 text-[#931d18]"><use href="#pinOn"/></svg>Condition</span><span class="flex items-center gap-[3px]">False<svg class="size-[10px]"><use href="#execOff"/></svg></span></div>
        </article>

        <!-- Function: Un Crouch -->
        <article class="absolute top-[400px] left-[774px] w-[127px] overflow-hidden rounded-[5px] border border-black bg-linear-to-b from-[#181818] to-[#0f0f0f] pb-1 text-[9px] leading-3 text-[#e4e4e4] shadow-[0_1px_4px_black]">
          <header class="flex h-[30px] gap-[3px] bg-linear-to-r from-[#4d7c9b] via-[#2f5269] via-70% to-[#333] pt-[2px] pl-[6px]"><svg class="h-3 w-3 text-[#1a9bff]"><use href="#func"/></svg><div><h3 class="text-[10px] font-medium leading-[14px]">Un Crouch</h3><p class="text-[#96999c] italic">Target is Character</p></div></header>
          <div class="flex h-[28px] items-center justify-between pr-2 pl-[9px]"><svg class="size-[10px]"><use href="#execOn"/></svg><svg class="size-[10px]"><use href="#execOff"/></svg></div>
          <label class="flex h-[23px] items-center pl-[9px]"><svg class="mr-[3px] h-[10px] w-3 text-[#1a7fe0]"><use href="#pin"/></svg>Target<input type="text" value="self" class="ml-[5px] h-[15px] w-[29px] border border-[#b0b0b0] pl-[2px] text-[11px]"></label>
        </article>

        <!-- Breadcrumb bar -->
        <div class="absolute inset-x-0 top-0 flex h-[38px] items-center bg-black/50 pr-[6px] pb-px">
          <button aria-label="Bookmarks" class="flex items-center gap-2 pl-[7px]"><svg class="h-4 w-3" viewBox="0 0 12 16"><path d="M1 0h8v2H4v10l-3-1z" fill="#666"/><path d="M5 3h7v13l-3.500-3L5 16z" fill="#c0c0c0"/></svg><svg class="size-[10px]"><use href="#chev"/></svg></button>
          <div class="ml-2 h-[34px] w-[3px] bg-[#141414]"></div>
          <button aria-label="Back" class="ml-[9px]"><svg class="h-[14px] w-[19px]" viewBox="0 0 19 14"><path d="M0 7l8-7v4.500h11v5H8V14z" fill="#fff"/></svg></button>
          <button aria-label="Forward" class="ml-5"><svg class="h-[14px] w-[19px]" viewBox="0 0 19 14"><path d="M19 7l-8-7v4.500H0v5h11V14z" fill="#7a7a7a"/></svg></button>
          <div class="ml-[10px] h-[34px] w-[3px] bg-[#141414]"></div>
          <svg class="ml-[11px] h-[19px] w-[22px]"><use href="#graph"/></svg>
          <nav class="ml-[15px] flex items-center gap-[10px] text-[19px] leading-6 text-[#808080]"><a href="#">BP_ThirdPersonCharacter</a><svg class="h-[14px] w-2" viewBox="0 0 8 14"><path d="M1 1l6 6-6 6" fill="none" stroke="#fff" stroke-width="2"/></svg><a href="#">Event Graph</a></nav>
          <span class="ml-auto text-lg font-bold text-[#343434]">Zoom -2</span>
        </div>
      </section>

      <!-- Compiler results -->
      <section class="mt-[5px] flex min-h-0 grow-[200] basis-0 flex-col">
        <div class="flex h-[25px] shrink-0">
          <div class="flex w-40 items-center rounded-t-[5px] bg-[#242424] pr-[14px] pb-[2px] pl-[7px]"><svg class="mr-2 h-4 w-3"><use href="#log"/></svg>Compiler Results<button aria-label="Close Compiler Results" class="ml-auto"><svg class="size-2"><use href="#close"/></svg></button></div>
          <div class="flex items-center gap-[6px] pb-[2px] pl-[7px]"><svg class="size-4"><use href="#search"/></svg>Find Results</div>
        </div>
        <div class="flex min-h-0 flex-1 flex-col justify-between bg-[#1a1a1a] pb-4">
          <ul class="pt-[18px] pl-[23px] font-['DejaVu_Sans_Mono',monospace] text-xs whitespace-nowrap"><li class="flex items-center gap-3"><span class="size-1 rounded-full bg-white"></span>[3822.25] Compile of BP_ThirdPersonCharacter successful! [in 65 ms] (/Game/ThirdPerson/Blueprints/BP_ThirdPersonCharacter.BP_ThirdPersonCharacter)</li></ul>
          <div class="grid grid-cols-[1fr_auto_1fr] pr-4 pl-[73px]">
            <span></span>
            <button class="mr-[127px] flex h-[21px] w-[74px] items-center justify-center gap-1 rounded-[3px] bg-[#2f2f2f] text-[#6a6a6a]">PAGE<svg class="size-[10px]"><use href="#chev"/></svg></button>
            <button class="h-[21px] w-[73px] justify-self-end rounded-[3px] bg-[#383838] text-white">CLEAR</button>
          </div>
        </div>
      </section>
    </div>

    <!-- Details -->
    <section class="flex w-[418px] shrink-0 flex-col">
      <div class="flex h-[25px] w-40 items-center rounded-t-[5px] bg-[#242424] pr-[14px] pb-[2px] pl-[5px]"><svg class="mr-[7px] h-[14px] w-[15px]"><use href="#pencil"/></svg>Details<button aria-label="Close Details" class="ml-auto"><svg class="size-2"><use href="#close"/></svg></button></div>
      <div class="mr-[3px] flex-1 bg-[#242424]"></div>
    </section>
  </main>

  <!-- Status bar -->
  <footer class="flex h-[29px] shrink-0 items-stretch justify-between bg-[#242424]">
    <div class="flex">
      <button class="flex w-[133px] items-center gap-1 border-r-2 border-[#151515] pt-[3px] pl-[10px]"><svg class="h-[14px] w-[17px]"><use href="#folder"/></svg>Content Drawer</button>
      <button class="flex w-[104px] items-center gap-[6px] border-r-2 border-[#151515] pt-[3px] pl-3"><svg class="h-4 w-3"><use href="#log"/></svg>Output Log</button>
      <div class="flex w-[400px] items-center border-r-2 border-[#151515] pt-[3px] pl-[14px]">
        <button class="flex items-center gap-1"><svg class="h-3 w-4" viewBox="0 0 16 12"><path d="M.7.7h14.600v10.600H.7z" fill="none" stroke="#c0c0c0" stroke-width="1.400"/><path d="M3 3l3 2.500L3 8M7.500 9H12" fill="none" stroke="#c0c0c0" stroke-width="1.400"/></svg>Cmd<svg class="ml-1 size-[10px]"><use href="#chev"/></svg></button>
        <input type="text" aria-label="Console command" placeholder="Enter Console Command" class="mr-2 ml-auto h-[22px] w-[300px] rounded-[4px] border border-[#383838] bg-[#0f0f0f] pl-2 font-['DejaVu_Sans_Mono',monospace] text-xs outline-none placeholder:text-[#4c4c4c]">
      </div>
    </div>
    <div class="flex">
      <button class="flex w-[109px] items-center gap-[6px] border-l-2 border-[#151515] pt-[3px] pl-[11px]"><svg class="h-4 w-[15px]" viewBox="0 0 15 16"><path d="M0 1h11l2 2v5H8v7H0z" fill="#c0c0c0"/><path d="M3 1h6v4H3zM2 9h5v1H2zM2 12h4v1H2z" fill="#444"/><path d="M12 9v6M9.500 10.500l5 3M14.500 10.500l-5 3" stroke="#c0c0c0" stroke-width="1.300"/></svg>1 Unsaved</button>
      <button class="flex items-center gap-[3px] border-l-2 border-[#151515] pt-[3px] pr-4 pl-[14px]"><svg class="h-4 w-[15px]" viewBox="0 0 15 16"><path d="M3 4v8M12 5c0 4-9 2-9 6" fill="none" stroke="#c0c0c0" stroke-width="1.400"/><circle cx="3" cy="3" r="2.400" fill="#c0c0c0"/><circle cx="3" cy="13" r="2.400" fill="#c0c0c0"/><circle cx="12" cy="3.500" r="2.400" fill="#c0c0c0"/></svg>Revision Control<svg class="ml-px size-[10px]"><use href="#chev"/></svg></button>
    </div>
  </footer>
</div>
</body>
</html>
